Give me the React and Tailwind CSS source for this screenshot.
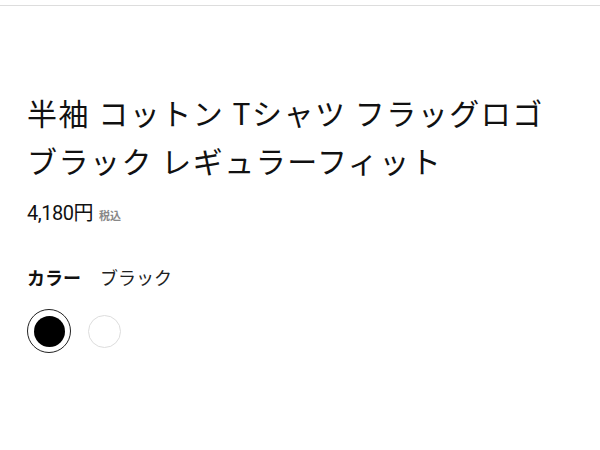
export default function App() {
  const jp = { fontFamily: '"Noto Sans CJK JP", "Noto Sans", sans-serif' };
  return (
    <div className="w-[600px] h-[450px] bg-white" style={jp}>
      <div className="h-[5px]" />
      <div className="h-px bg-[#dddddd]" />
      <div className="pl-[27px] pt-[82px]">
        <h1 className="text-[30px] leading-[48px] font-normal text-[#111] tracking-[1.5px]">
          半袖 コットン Tシャツ フラッグロゴ
          <br />
          ブラック レギュラーフィット
        </h1>
        <div className="mt-[14px] flex items-baseline gap-[6px]">
          <span
            className="text-[20px] text-[#111] tracking-[-0.5px]"
            style={{ fontFamily: '"Liberation Sans Narrow", "Roboto", "Noto Sans CJK JP", sans-serif' }}
          >
            4,180円
          </span>
          <span className="text-[11px] font-bold text-[#888]">税込</span>
        </div>
        <div className="mt-[36px] flex items-center gap-[19px] text-[18px]">
          <span className="font-bold text-[#111]">カラー</span>
          <span className="text-[#222]">ブラック</span>
        </div>
        <div className="mt-[18px] flex items-center gap-[11px]">
          <div className="w-[44px] h-[44px] rounded-full border border-[#222] flex items-center justify-center">
            <div className="w-[31px] h-[31px] rounded-full bg-black" />
          </div>
          <div className="w-[44px] h-[44px] flex items-center justify-center">
            <div className="w-[33px] h-[33px] rounded-full border border-[#dddddd] bg-white" />
          </div>
        </div>
      </div>
    </div>
  );
}
